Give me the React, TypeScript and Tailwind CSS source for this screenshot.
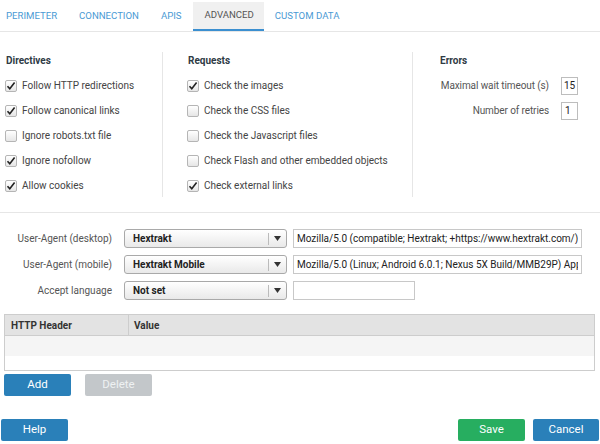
const tabs = ["PERIMETER", "CONNECTION", "APIS", "ADVANCED", "CUSTOM DATA"];

const directives = [
  { label: "Follow HTTP redirections", on: true },
  { label: "Follow canonical links", on: true },
  { label: "Ignore robots.txt file", on: false },
  { label: "Ignore nofollow", on: true },
  { label: "Allow cookies", on: true },
];

const requests = [
  { label: "Check the images", on: true },
  { label: "Check the CSS files", on: false },
  { label: "Check the Javascript files", on: false },
  { label: "Check Flash and other embedded objects", on: false },
  { label: "Check external links", on: true },
];

const Check = ({ on }: { on: boolean }) => (
  <span className="w-[12px] h-[12px] rounded-[2px] border border-[#b5b5b5] bg-gradient-to-b from-white to-[#e6e6e6] flex items-center justify-center shrink-0">
    {on && (
      <svg width="10" height="10" viewBox="0 0 10 10">
        <path d="M1.5 5.2 L3.8 7.8 L8.6 1.6" fill="none" stroke="#222" strokeWidth="1.6" />
      </svg>
    )}
  </span>
);

const CheckRow = ({ label, on }: { label: string; on: boolean }) => (
  <div className="h-[25px] flex items-center gap-[5px]">
    <Check on={on} />
    <span className="text-[#444]">{label}</span>
  </div>
);

const Select = ({ value }: { value: string }) => (
  <div className="w-[163px] h-[19px] rounded-[3px] border border-[#a9a9a9] bg-gradient-to-b from-white to-[#e9e9e9] flex items-center">
    <span className="flex-1 pl-[8px] font-bold text-[#222]">{value}</span>
    <span className="w-px h-[12px] bg-[#bbb]" />
    <span className="w-[17px] flex justify-center">
      <svg width="7" height="5" viewBox="0 0 7 5">
        <path d="M0 0 H7 L3.5 5 Z" fill="#333" />
      </svg>
    </span>
  </div>
);

const FormRow = ({ label, select, value, short }: { label: string; select: string; value: string; short?: boolean }) => (
  <div className="flex items-center h-[19px]">
    <span className="w-[112px] text-right text-[#555]">{label}</span>
    <span className="ml-[12px]">
      <Select value={select} />
    </span>
    <input
      readOnly
      defaultValue={value}
      className={`ml-[6px] h-[19px] border border-[#c8c8c8] px-[3px] text-[#222] outline-none ${short ? "w-[122px]" : "w-[289px]"}`}
    />
  </div>
);

export default function App() {
  return (
    <div className="w-[600px] h-[444px] bg-white text-[10px] text-[#333] overflow-hidden" style={{ fontFamily: "Roboto, 'Liberation Sans', sans-serif" }}>
      <div className="flex h-[32px] pt-[2px] border-b border-[#e6e6e6]">
        {tabs.map((t, i) => (
          <div
            key={t}
            className={`flex items-center text-[9.6px] ${i === 0 ? "pl-[6px] pr-[11px]" : "px-[11px]"} ${
              t === "ADVANCED" ? "bg-[#f0f0f0] text-[#555] border-b-2 border-[#3b8fd0] pl-[12px] pr-[10px]" : "text-[#4a9ad4]"
            }`}
          >
            {t}
          </div>
        ))}
      </div>

      <div className="flex mt-[20px] h-[145px]">
        <div className="w-[163px] pl-[5px] border-r border-[#e6e6e6]">
          <div className="h-[16px] flex items-center pl-[1px] font-bold text-[#2f3b45]">Directives</div>
          <div className="mt-[5px]">
            {directives.map((d) => (
              <CheckRow key={d.label} {...d} />
            ))}
          </div>
        </div>
        <div className="w-[250px] pl-[24px] border-r border-[#e6e6e6]">
          <div className="h-[16px] flex items-center pl-[1px] font-bold text-[#2f3b45]">Requests</div>
          <div className="mt-[5px]">
            {requests.map((d) => (
              <CheckRow key={d.label} {...d} />
            ))}
          </div>
        </div>
        <div className="flex-1">
          <div className="h-[16px] flex items-center pl-[27px] font-bold text-[#2f3b45]">Errors</div>
          <div className="mt-[5px] pr-[22px]">
            <div className="h-[25px] flex items-center justify-end">
              <span className="text-[#555] tracking-[-0.1px]">Maximal wait timeout (s)</span>
              <span className="ml-[12px] w-[17px] h-[18px] border border-[#bdbdbd] flex items-center pl-[2px] text-[#222]">15</span>
            </div>
            <div className="h-[25px] flex items-center justify-end">
              <span className="text-[#555] tracking-[-0.1px]">Number of retries</span>
              <span className="ml-[12px] w-[17px] h-[18px] border border-[#bdbdbd] flex items-center pl-[3px] text-[#222]">1</span>
            </div>
          </div>
        </div>
      </div>

      <div className="mt-[15px] border-t border-[#e6e6e6]" />

      <div className="mt-[16px] flex flex-col gap-[7px]">
        <FormRow label="User-Agent (desktop)" select="Hextrakt" value="Mozilla/5.0 (compatible; Hextrakt; +https://www.hextrakt.com/)" />
        <FormRow
          label="User-Agent (mobile)"
          select="Hextrakt Mobile"
          value="Mozilla/5.0 (Linux; Android 6.0.1; Nexus 5X Build/MMB29P) AppleWebKit/537.36 (KHTML, like Gecko) Chrome/41.0.2272.96 Mobile Safari/537.36 (compatible; Hextrakt; +https://www.hextrakt.com/)"
        />
        <FormRow label="Accept language" select="Not set" value="" short />
      </div>

      <div className="mx-[4px] mt-[14px] w-[591px] border border-[#cdcdcd]">
        <div className="flex h-[21px] bg-[#e3e3e3] border-b border-[#cdcdcd] font-bold text-[#333]">
          <div className="w-[124px] pl-[6px] flex items-center border-r border-[#cdcdcd]">HTTP Header</div>
          <div className="pl-[5px] flex items-center">Value</div>
        </div>
        <div className="h-[20px] bg-[#f5f5f5]" />
        <div className="h-[14px] bg-white" />
      </div>

      <div className="flex gap-[14px] ml-[4px] mt-[3px] text-[11.5px]">
        <button className="w-[67px] h-[22px] rounded-[2px] bg-[#2a80b9] text-white">Add</button>
        <button className="w-[67px] h-[22px] rounded-[2px] bg-[#c3c7ca] text-[#eef1f2]">Delete</button>
      </div>

      <div className="flex items-center mt-[23px] px-[1px] text-[11.5px]">
        <button className="w-[67px] h-[22px] rounded-[2px] bg-[#2a80b9] text-white">Help</button>
        <div className="flex-1" />
        <button className="w-[67px] h-[22px] rounded-[2px] bg-[#27ae60] text-white">Save</button>
        <button className="ml-[8px] w-[66px] h-[22px] rounded-[2px] bg-[#2a80b9] text-white">Cancel</button>
      </div>
    </div>
  );
}
